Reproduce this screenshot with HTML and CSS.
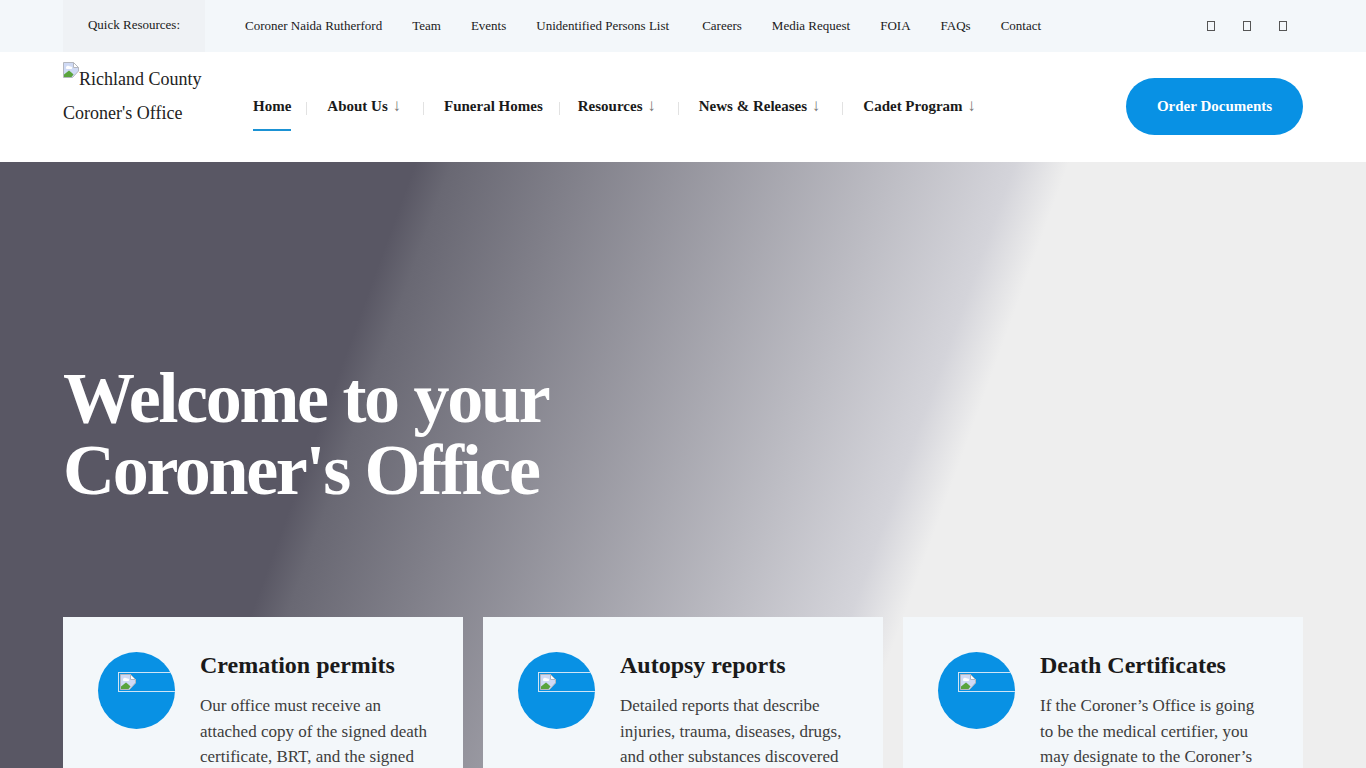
FILE: index.html
```html
<!DOCTYPE html>
<html lang="en">
<head>
    <meta charset="UTF-8">
    <meta name="viewport" content="width=device-width, initial-scale=1.0">
    <title>Richland County Coroner's Office</title>
    <link rel="stylesheet" href="styles.css">
</head>
<body>

<div class="topbar">
    <div class="quick-label">Quick Resources:</div>
    <div class="quick-links">
        <a href="#">Coroner Naida Rutherford</a>
        <a href="#">Team</a>
        <a href="#">Events</a>
        <a class="wide" href="#">Unidentified Persons List</a>
        <a href="#">Careers</a>
        <a href="#">Media Request</a>
        <a href="#">FOIA</a>
        <a href="#">FAQs</a>
        <a href="#">Contact</a>
    </div>
    <div class="social">
        <span class="tofu"></span>
        <span class="tofu"></span>
        <span class="tofu"></span>
    </div>
</div>

<header class="mainbar">
    <a class="logo" href="#">
        <svg class="broken" width="16" height="16" viewBox="0 0 16 16">
            <path d="M0.5 0.5H10.5L15.5 5.5V9L9.5 15.5H0.5Z" fill="#cfdaf5" stroke="#b4b7bf"/>
            <path d="M10.5 0.5V5.5H15.5Z" fill="#fff" stroke="#b4b7bf"/>
            <path d="M3 5.5C3 3.5 6 3 7 4.5C9 4 10 6 8.500 7H4C3 7 2.500 6 3 5.500Z" fill="#fff"/>
            <path d="M1 15V12.500L6 8.500L9 11L10.500 12.500L8.500 15Z" fill="#5aa43c"/>
        </svg>Richland County Coroner's Office
    </a>
    <nav class="nav">
        <a class="nav-item active" href="#">Home</a>
        <a class="nav-item drop" href="#">About Us <i>↓</i></a>
        <a class="nav-item plain" href="#">Funeral Homes</a>
        <a class="nav-item drop" href="#">Resources <i>↓</i></a>
        <a class="nav-item drop" href="#">News &amp; Releases <i>↓</i></a>
        <a class="nav-item last" href="#">Cadet Program <i>↓</i></a>
    </nav>
    <a class="order-btn" href="#">Order Documents</a>
</header>

<section class="hero">
    <h1>Welcome to your<br>Coroner's Office</h1>
    <div class="cards">
        <div class="card">
            <div class="card-icon">
                <span class="icon-frame">
                    <svg width="16" height="16" viewBox="0 0 16 16">
                        <path d="M0.5 0.5H10.5L15.5 5.5V9L9.5 15.5H0.5Z" fill="#cfdaf5" stroke="#b4b7bf"/>
                        <path d="M10.5 0.5V5.5H15.5Z" fill="#fff" stroke="#b4b7bf"/>
                        <path d="M3 5.5C3 3.5 6 3 7 4.5C9 4 10 6 8.500 7H4C3 7 2.500 6 3 5.500Z" fill="#fff"/>
                        <path d="M1 15V12.500L6 8.500L9 11L10.500 12.500L8.500 15Z" fill="#5aa43c"/>
                    </svg>
                </span>
            </div>
            <div class="card-body">
                <h3>Cremation permits</h3>
                <p>Our office must receive an attached copy of the signed death certificate, BRT, and the signed</p>
            </div>
        </div>
        <div class="card">
            <div class="card-icon">
                <span class="icon-frame">
                    <svg width="16" height="16" viewBox="0 0 16 16">
                        <path d="M0.5 0.5H10.5L15.5 5.5V9L9.5 15.5H0.5Z" fill="#cfdaf5" stroke="#b4b7bf"/>
                        <path d="M10.5 0.5V5.5H15.5Z" fill="#fff" stroke="#b4b7bf"/>
                        <path d="M3 5.5C3 3.5 6 3 7 4.5C9 4 10 6 8.500 7H4C3 7 2.500 6 3 5.500Z" fill="#fff"/>
                        <path d="M1 15V12.500L6 8.500L9 11L10.500 12.500L8.500 15Z" fill="#5aa43c"/>
                    </svg>
                </span>
            </div>
            <div class="card-body">
                <h3>Autopsy reports</h3>
                <p>Detailed reports that describe injuries, trauma, diseases, drugs, and other substances discovered</p>
            </div>
        </div>
        <div class="card">
            <div class="card-icon">
                <span class="icon-frame">
                    <svg width="16" height="16" viewBox="0 0 16 16">
                        <path d="M0.5 0.5H10.5L15.5 5.5V9L9.5 15.5H0.5Z" fill="#cfdaf5" stroke="#b4b7bf"/>
                        <path d="M10.5 0.5V5.5H15.5Z" fill="#fff" stroke="#b4b7bf"/>
                        <path d="M3 5.5C3 3.5 6 3 7 4.5C9 4 10 6 8.500 7H4C3 7 2.500 6 3 5.500Z" fill="#fff"/>
                        <path d="M1 15V12.500L6 8.500L9 11L10.500 12.500L8.500 15Z" fill="#5aa43c"/>
                    </svg>
                </span>
            </div>
            <div class="card-body">
                <h3>Death Certificates</h3>
                <p>If the Coroner’s Office is going to be the medical certifier, you may designate to the Coroner’s</p>
            </div>
        </div>
    </div>
</section>

</body>
</html>
```

FILE: styles.css
```css
html, body {
    margin: 0;
    height: 768px;
    overflow: hidden;
}
body {
    font-family: "Liberation Serif", "Times New Roman", serif;
    color: #1a1a1a;
    background: #fff;
}
a {
    color: inherit;
    text-decoration: none;
}

/* top strip */
.topbar {
    display: flex;
    align-items: center;
    height: 52px;
    padding: 0 63px;
    background: #f3f7fa;
    font-size: 13px;
}
.quick-label {
    width: 142px;
    height: 52px;
    margin-right: 40px;
    line-height: 50px;
    text-align: center;
    background: #eff2f5;
}
.quick-links {
    display: flex;
    gap: 30px;
    line-height: 52px;
}
.quick-links .wide {
    margin-right: 3px;
}
.social {
    display: flex;
    gap: 28px;
    margin-left: auto;
    margin-right: 16px;
}
.tofu {
    width: 6px;
    height: 8px;
    border: 1px solid #555;
}

/* logo + nav */
.mainbar {
    display: flex;
    align-items: center;
    height: 110px;
    padding: 0 63px 1px;
    box-sizing: border-box;
}
.logo {
    flex: 0 0 190px;
    width: 190px;
    padding-right: 30px;
    margin-bottom: 21px;
    box-sizing: border-box;
    font-size: 18px;
    line-height: 34px;
    color: #222;
}
.broken {
    vertical-align: 7px;
}
.nav {
    display: flex;
    align-items: center;
    margin-bottom: 1px;
    font-size: 15px;
    font-weight: 700;
}
.nav-item {
    position: relative;
    padding: 0 36px 0 0;
    line-height: 50px;
}
.nav-item.plain {
    padding-right: 35px;
}
.nav-item.drop {
    padding-right: 43px;
}
.nav-item i {
    margin-left: 1px;
    font-style: normal;
    font-weight: 400;
    font-size: 17px;
    color: #777;
}
.nav-item::after {
    content: "";
    position: absolute;
    right: 20px;
    top: 21px;
    width: 1px;
    height: 13px;
    background: #e2e2e2;
}
.nav-item.plain::after {
    right: 18px;
}
.nav-item.last::after {
    display: none;
}
.nav-item.active::before {
    content: "";
    position: absolute;
    left: 0;
    right: 36px;
    bottom: 0;
    height: 2px;
    background: #1b92d4;
}
.order-btn {
    margin-left: auto;
    width: 177px;
    height: 57px;
    line-height: 56px;
    text-align: center;
    border-radius: 29px;
    background: #0891e4;
    color: #fff;
    font-size: 15px;
    font-weight: 700;
}

/* hero */
.hero {
    height: 606px;
    padding: 0 63px;
    box-sizing: border-box;
    overflow: hidden;
    background: linear-gradient(110deg, #595764 26.2%, #696873 28.5%, #d4d4da 64%, #eeeeee 67.4%);
}
.hero h1 {
    margin: 0;
    padding-top: 200px;
    height: 255px;
    font-size: 72px;
    line-height: 72px;
    font-weight: 700;
    letter-spacing: -0.032em;
    color: #fff;
}

/* cards */
.cards {
    display: grid;
    grid-template-columns: repeat(3, 400px);
    gap: 20px;
}
.card {
    display: flex;
    height: 300px;
    padding: 35px 34px 0 35px;
    box-sizing: border-box;
    background: #f3f7fa;
}
.card-icon {
    flex: 0 0 77px;
    height: 77px;
    margin-right: 25px;
    border-radius: 50%;
    background: #0891e4;
    overflow: hidden;
}
.icon-frame {
    display: block;
    width: 60px;
    height: 20px;
    margin: 20px 0 0 20px;
    padding: 1px;
    border: 1px solid #cfe4f5;
    box-sizing: border-box;
}
.icon-frame svg {
    display: block;
}
.card-body h3 {
    margin: -1px 0 14px;
    font-size: 24px;
    line-height: 28px;
}
.card-body p {
    margin: 0;
    font-size: 17px;
    line-height: 25.5px;
    color: #3d3d3d;
}
```
